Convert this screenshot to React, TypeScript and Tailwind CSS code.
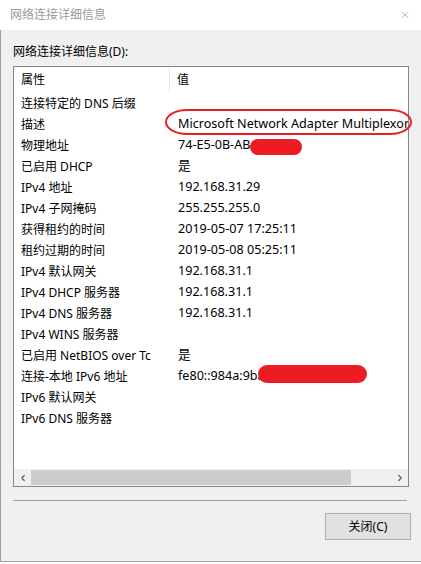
import { X, ChevronLeft, ChevronRight } from 'lucide-react';

const rows: [string, string][] = [
  ['连接特定的 DNS 后缀', ''],
  ['描述', 'Microsoft Network Adapter Multiplexor'],
  ['物理地址', '74-E5-0B-AB'],
  ['已启用 DHCP', '是'],
  ['IPv4 地址', '192.168.31.29'],
  ['IPv4 子网掩码', '255.255.255.0'],
  ['获得租约的时间', '2019-05-07 17:25:11'],
  ['租约过期的时间', '2019-05-08 05:25:11'],
  ['IPv4 默认网关', '192.168.31.1'],
  ['IPv4 DHCP 服务器', '192.168.31.1'],
  ['IPv4 DNS 服务器', '192.168.31.1'],
  ['IPv4 WINS 服务器', ''],
  ['已启用 NetBIOS over Tc', '是'],
  ['连接-本地 IPv6 地址', 'fe80::984a:9ba'],
  ['IPv6 默认网关', ''],
  ['IPv6 DNS 服务器', ''],
];

export default function App() {
  return (
    <div
      className="relative w-[421px] h-[564px] bg-white text-[12px] text-black overflow-hidden"
      style={{ fontFamily: '"Noto Sans", "Noto Sans CJK SC", sans-serif' }}
    >
      {/* Title bar */}
      <div className="h-[30px] flex items-center justify-between pl-[10px] pr-[10px]">
        <span className="text-[12px] text-[#9a9a9a]">网络连接详细信息</span>
        <X className="w-[12px] h-[12px] text-[#8a8a8a]" strokeWidth={1.2} />
      </div>

      {/* Body */}
      <div className="h-[532px] bg-[#f0f0f0] border-l border-b border-[#a0a0a0] pt-[14px]">
        <div className="pl-[12px] leading-[16px]">网络连接详细信息(D):</div>

        {/* List view */}
        <div className="mt-[6px] ml-[12px] w-[396px] h-[421px] bg-white border border-[#828790] flex flex-col">
          <div className="h-[26px] flex items-center shrink-0">
            <div className="w-[156px] shrink-0 pl-[7px] h-[24px] flex items-center border-r border-[#e5e5e5]">属性</div>
            <div className="pl-[7px]">值</div>
          </div>
          <div className="flex-1 overflow-hidden">
            {rows.map(([k, v]) => (
              <div key={k} className="h-[21px] flex items-center whitespace-nowrap">
                <div className="w-[156px] shrink-0 pl-[7px] pr-[2px]">
                  <div className="overflow-hidden">{k}</div>
                </div>
                <div className="pl-[8px] text-[12.6px] overflow-hidden">{v}</div>
              </div>
            ))}
          </div>
          {/* Horizontal scrollbar */}
          <div className="h-[17px] bg-[#f0f0f0] flex items-center shrink-0">
            <div className="w-[17px] flex justify-center">
              <ChevronLeft className="w-[10px] h-[10px] text-[#606060]" strokeWidth={3} />
            </div>
            <div className="w-[320px] h-[15px] bg-[#cdcdcd]" />
            <div className="flex-1" />
            <div className="w-[17px] flex justify-center">
              <ChevronRight className="w-[10px] h-[10px] text-[#606060]" strokeWidth={3} />
            </div>
          </div>
        </div>

        <div className="mt-[13px] ml-[12px] w-[394px] h-px bg-[#a0a0a0]" />

        <div className="mt-[12px] flex justify-end pr-[10px]">
          <button className="w-[86px] h-[27px] bg-[#e1e1e1] border border-[#adadad] text-[12px] text-black">
            关闭(C)
          </button>
        </div>
      </div>

      {/* annotations */}
      <div className="absolute left-[165px] top-[109px] w-[247px] h-[26px] border-2 border-[#ed1c24] rounded-[22px/13px]" />
      <div className="absolute left-[250px] top-[139px] w-[52px] h-[16px] bg-[#ed1c24] rounded-[8px]" />
      <div className="absolute left-[258px] top-[365px] w-[109px] h-[18px] bg-[#ed1c24] rounded-[9px]" />
    </div>
  );
}
